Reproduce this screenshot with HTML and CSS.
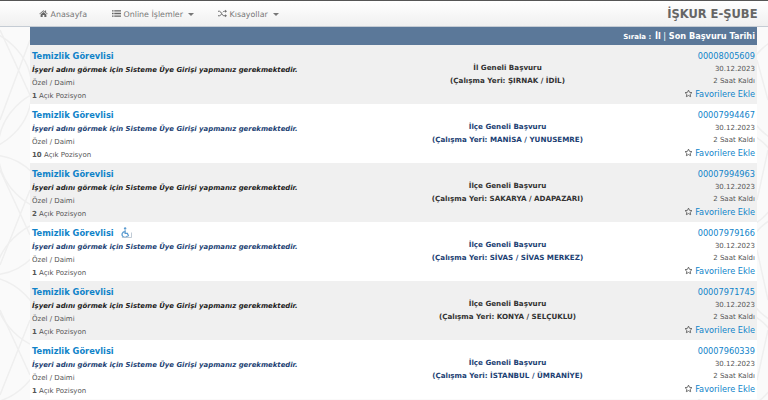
FILE: index.html
```html
<!DOCTYPE html>
<html lang="tr">
<head>
  <meta charset="UTF-8" />
  <meta name="viewport" content="width=device-width, initial-scale=1.0" />
  <title>İŞKUR E-Şube</title>
  <link rel="stylesheet" href="styles.css">
</head>
<body>
  <svg width="0" height="0" class="defs">
    <symbol id="star" viewBox="0 0 24 24"><path d="M12 3l2.800 5.900 6.400.8-4.700 4.400 1.200 6.400L12 17.400l-5.700 3.100 1.200-6.400L2.800 9.700l6.400-.8z" fill="none" stroke="currentColor" stroke-width="2.200"/></symbol>
  </svg>

  <!-- faint pattern behind the page -->
  <svg class="page-pattern" viewBox="0 0 768 400">
    <g fill="none" stroke="#efefef" stroke-width="1.500">
      <circle cx="-30" cy="90" r="62"/>
      <circle cx="-10" cy="215" r="60"/>
      <circle cx="-20" cy="340" r="64"/>
      <circle cx="60" cy="150" r="62"/>
      <circle cx="60" cy="285" r="66"/>
      <path d="M0 30L30 95M30 40L0 120M0 170L30 235M30 190L0 265M0 310L30 375M30 320L0 395"/>
      <circle cx="800" cy="90" r="56"/>
      <circle cx="730" cy="180" r="50"/>
      <circle cx="800" cy="270" r="58"/>
      <circle cx="730" cy="360" r="50"/>
      <path d="M757 60L768 100M768 150L757 200M757 250L768 300M768 330L757 380"/>
    </g>
  </svg>

  <nav class="navbar">
    <ul class="nav-menu">
      <li class="nav-home">
        <svg class="nav-icon" viewBox="0 0 14 12"><path d="M7 1L0.500 6.500l.7.8L7 2.600l5.800 4.700.7-.8L11 4.400V1.500H9.500v1.600zM2.500 7.500V11.500h3.200V8.500h2.600v3h3.200V7.500L7 3.800z" fill="currentColor"/></svg>
        <span>Anasayfa</span>
      </li>
      <li class="nav-online">
        <svg class="nav-icon" viewBox="0 0 14 12"><path d="M0 1h2.500v2H0zM3.500 1H14v2H3.500zM0 5h2.500v2H0zM3.500 5H14v2H3.500zM0 9h2.500v2H0zM3.500 9H14v2H3.500z" fill="currentColor"/></svg>
        <span>Online İşlemler</span> <span class="caret"></span>
      </li>
      <li class="nav-short">
        <svg class="nav-icon" viewBox="0 0 14 12"><path d="M0 2.500h2.500c2.500 0 3.500 7 6.500 7h2M0 9.500h2.500c1.300 0 2.200-1.500 3-3M7.500 4c.7-1 1.500-1.500 2.500-1.500h1" fill="none" stroke="currentColor" stroke-width="1.500"/><path d="M11 0l3 2.500L11 5zM11 7l3 2.500-3 2.500z" fill="currentColor"/></svg>
        <span>Kısayollar</span> <span class="caret"></span>
      </li>
    </ul>
    <div class="brand">İŞKUR E-ŞUBE</div>
  </nav>

  <main class="list">
    <div class="sort-bar"><span class="sort-label">Sırala :</span> <b>İl</b> | <b>Son Başvuru Tarihi</b></div>

    <div class="job">
      <div class="job-left">
        <a class="job-title">Temizlik Görevlisi</a>
        <p class="job-firm">İşyeri adını görmek için Sisteme Üye Girişi yapmanız gerekmektedir.</p>
        <p class="job-meta">Özel / Daimi</p>
        <p class="job-meta"><b>1</b> Açık Pozisyon</p>
      </div>
      <div class="job-mid"><p>İl Geneli Başvuru</p><p>(Çalışma Yeri: ŞIRNAK / İDİL)</p></div>
      <div class="job-right">
        <a class="job-no">00008005609</a>
        <p class="job-meta">30.12.2023</p>
        <p class="job-meta">2 Saat Kaldı</p>
        <a class="job-fav"><svg class="star"><use href="#star"/></svg> Favorilere Ekle</a>
      </div>
    </div>

    <div class="job">
      <div class="job-left">
        <a class="job-title">Temizlik Görevlisi</a>
        <p class="job-firm">İşyeri adını görmek için Sisteme Üye Girişi yapmanız gerekmektedir.</p>
        <p class="job-meta">Özel / Daimi</p>
        <p class="job-meta"><b>10</b> Açık Pozisyon</p>
      </div>
      <div class="job-mid"><p>İlçe Geneli Başvuru</p><p>(Çalışma Yeri: MANİSA / YUNUSEMRE)</p></div>
      <div class="job-right">
        <a class="job-no">00007994467</a>
        <p class="job-meta">30.12.2023</p>
        <p class="job-meta">2 Saat Kaldı</p>
        <a class="job-fav"><svg class="star"><use href="#star"/></svg> Favorilere Ekle</a>
      </div>
    </div>

    <div class="job">
      <div class="job-left">
        <a class="job-title">Temizlik Görevlisi</a>
        <p class="job-firm">İşyeri adını görmek için Sisteme Üye Girişi yapmanız gerekmektedir.</p>
        <p class="job-meta">Özel / Daimi</p>
        <p class="job-meta"><b>2</b> Açık Pozisyon</p>
      </div>
      <div class="job-mid"><p>İlçe Geneli Başvuru</p><p>(Çalışma Yeri: SAKARYA / ADAPAZARI)</p></div>
      <div class="job-right">
        <a class="job-no">00007994963</a>
        <p class="job-meta">30.12.2023</p>
        <p class="job-meta">2 Saat Kaldı</p>
        <a class="job-fav"><svg class="star"><use href="#star"/></svg> Favorilere Ekle</a>
      </div>
    </div>

    <div class="job">
      <div class="job-left">
        <a class="job-title">Temizlik Görevlisi
          <svg class="disabled-icon" viewBox="0 0 12 12"><circle cx="4.500" cy="1.500" r="1.300" fill="#5b9bd0"/><path d="M4.500 3.500v3.500h2.500l1.300 3M4 5a3.200 3.200 0 1 0 3 5" fill="none" stroke="#5b9bd0" stroke-width="1.400"/><path d="M1 11.500h10.500M11.500 6v5.500" stroke="#b8c4d0" stroke-width="1"/></svg>
        </a>
        <p class="job-firm">İşyeri adını görmek için Sisteme Üye Girişi yapmanız gerekmektedir.</p>
        <p class="job-meta">Özel / Daimi</p>
        <p class="job-meta"><b>1</b> Açık Pozisyon</p>
      </div>
      <div class="job-mid"><p>İlçe Geneli Başvuru</p><p>(Çalışma Yeri: SİVAS / SİVAS MERKEZ)</p></div>
      <div class="job-right">
        <a class="job-no">00007979166</a>
        <p class="job-meta">30.12.2023</p>
        <p class="job-meta">2 Saat Kaldı</p>
        <a class="job-fav"><svg class="star"><use href="#star"/></svg> Favorilere Ekle</a>
      </div>
    </div>

    <div class="job">
      <div class="job-left">
        <a class="job-title">Temizlik Görevlisi</a>
        <p class="job-firm">İşyeri adını görmek için Sisteme Üye Girişi yapmanız gerekmektedir.</p>
        <p class="job-meta">Özel / Daimi</p>
        <p class="job-meta"><b>1</b> Açık Pozisyon</p>
      </div>
      <div class="job-mid"><p>İlçe Geneli Başvuru</p><p>(Çalışma Yeri: KONYA / SELÇUKLU)</p></div>
      <div class="job-right">
        <a class="job-no">00007971745</a>
        <p class="job-meta">30.12.2023</p>
        <p class="job-meta">2 Saat Kaldı</p>
        <a class="job-fav"><svg class="star"><use href="#star"/></svg> Favorilere Ekle</a>
      </div>
    </div>

    <div class="job">
      <div class="job-left">
        <a class="job-title">Temizlik Görevlisi</a>
        <p class="job-firm">İşyeri adını görmek için Sisteme Üye Girişi yapmanız gerekmektedir.</p>
        <p class="job-meta">Özel / Daimi</p>
        <p class="job-meta"><b>1</b> Açık Pozisyon</p>
      </div>
      <div class="job-mid"><p>İlçe Geneli Başvuru</p><p>(Çalışma Yeri: İSTANBUL / ÜMRANİYE)</p></div>
      <div class="job-right">
        <a class="job-no">00007960339</a>
        <p class="job-meta">30.12.2023</p>
        <p class="job-meta">2 Saat Kaldı</p>
        <a class="job-fav"><svg class="star"><use href="#star"/></svg> Favorilere Ekle</a>
      </div>
    </div>
  </main>
</body>
</html>
```

FILE: styles.css
```css
* {
  margin: 0;
  padding: 0;
  box-sizing: border-box;
}

html, body {
  height: 400px;
  overflow: hidden;
}

body {
  font-family: "DejaVu Sans", Verdana, sans-serif;
  font-size: 9px;
  color: #333;
  background: #fafafa;
}

.defs {
  display: block;
}

.page-pattern {
  position: absolute;
  top: 0;
  left: 0;
  width: 768px;
  height: 400px;
}

.navbar {
  position: relative;
  height: 27px;
  display: flex;
  align-items: center;
  justify-content: space-between;
  padding: 0 10.500px 0 39px;
  border-top: 1px solid #555;
  border-bottom: 1px solid #c5ccd4;
  background: linear-gradient(to bottom, #fff, #f0f0f0);
}

.nav-menu {
  display: flex;
  list-style: none;
  font-size: 7.900px;
  color: #777;
}

.nav-home {
  width: 73px;
}

.nav-online {
  width: 106px;
}

.nav-icon {
  width: 9px;
  height: 9px;
  vertical-align: -1px;
  color: #666;
}

.caret {
  display: inline-block;
  margin-left: 3px;
  vertical-align: middle;
  border-top: 3px solid #777;
  border-left: 3px solid transparent;
  border-right: 3px solid transparent;
}

.brand {
  font-size: 11.500px;
  font-weight: bold;
  color: #666;
}

.list {
  position: relative;
  margin: 0 11px 0 30px;
}

.sort-bar {
  height: 18px;
  line-height: 18px;
  padding-right: 2px;
  text-align: right;
  font-size: 8.200px;
  color: #fff;
  background: #5b7899;
}

.sort-label {
  margin-right: 1px;
  font-size: 7px;
  font-weight: bold;
}

.job {
  height: 59px;
  display: flex;
  padding: 4px 2px 0 2px;
  background: #fff;
}

.job:nth-child(even) {
  background: #f0f0f0;
}

.job-left {
  width: 300px;
  white-space: nowrap;
}

.job-title {
  display: block;
  height: 14px;
  line-height: 14px;
  font-size: 8.300px;
  font-weight: bold;
  color: #0f83c9;
}

.disabled-icon {
  width: 11px;
  height: 11px;
  margin-left: 4px;
  vertical-align: -2px;
}

.job-firm {
  line-height: 14px;
  font-size: 6.900px;
  font-weight: bold;
  font-style: italic;
  color: #222;
}

.job-meta {
  font-size: 7px;
  line-height: 12.500px;
  color: #555;
}

.job-mid {
  flex: 1;
  padding-top: 13px;
  text-align: center;
  font-size: 7.150px;
  font-weight: bold;
  line-height: 12.500px;
  color: #333;
}

.job:nth-child(odd) .job-firm,
.job:nth-child(odd) .job-mid {
  color: #1c3f73;
}

.job-right {
  width: 72px;
  padding-top: 0.500px;
  text-align: right;
  white-space: nowrap;
}

.job-no {
  display: block;
  height: 13px;
  line-height: 13px;
  font-size: 8.200px;
  color: #0f83c9;
}

.job-fav {
  display: block;
  line-height: 13px;
  font-size: 8.200px;
  color: #0f83c9;
}

.star {
  width: 9px;
  height: 9px;
  color: #555;
  vertical-align: -1px;
}
```
